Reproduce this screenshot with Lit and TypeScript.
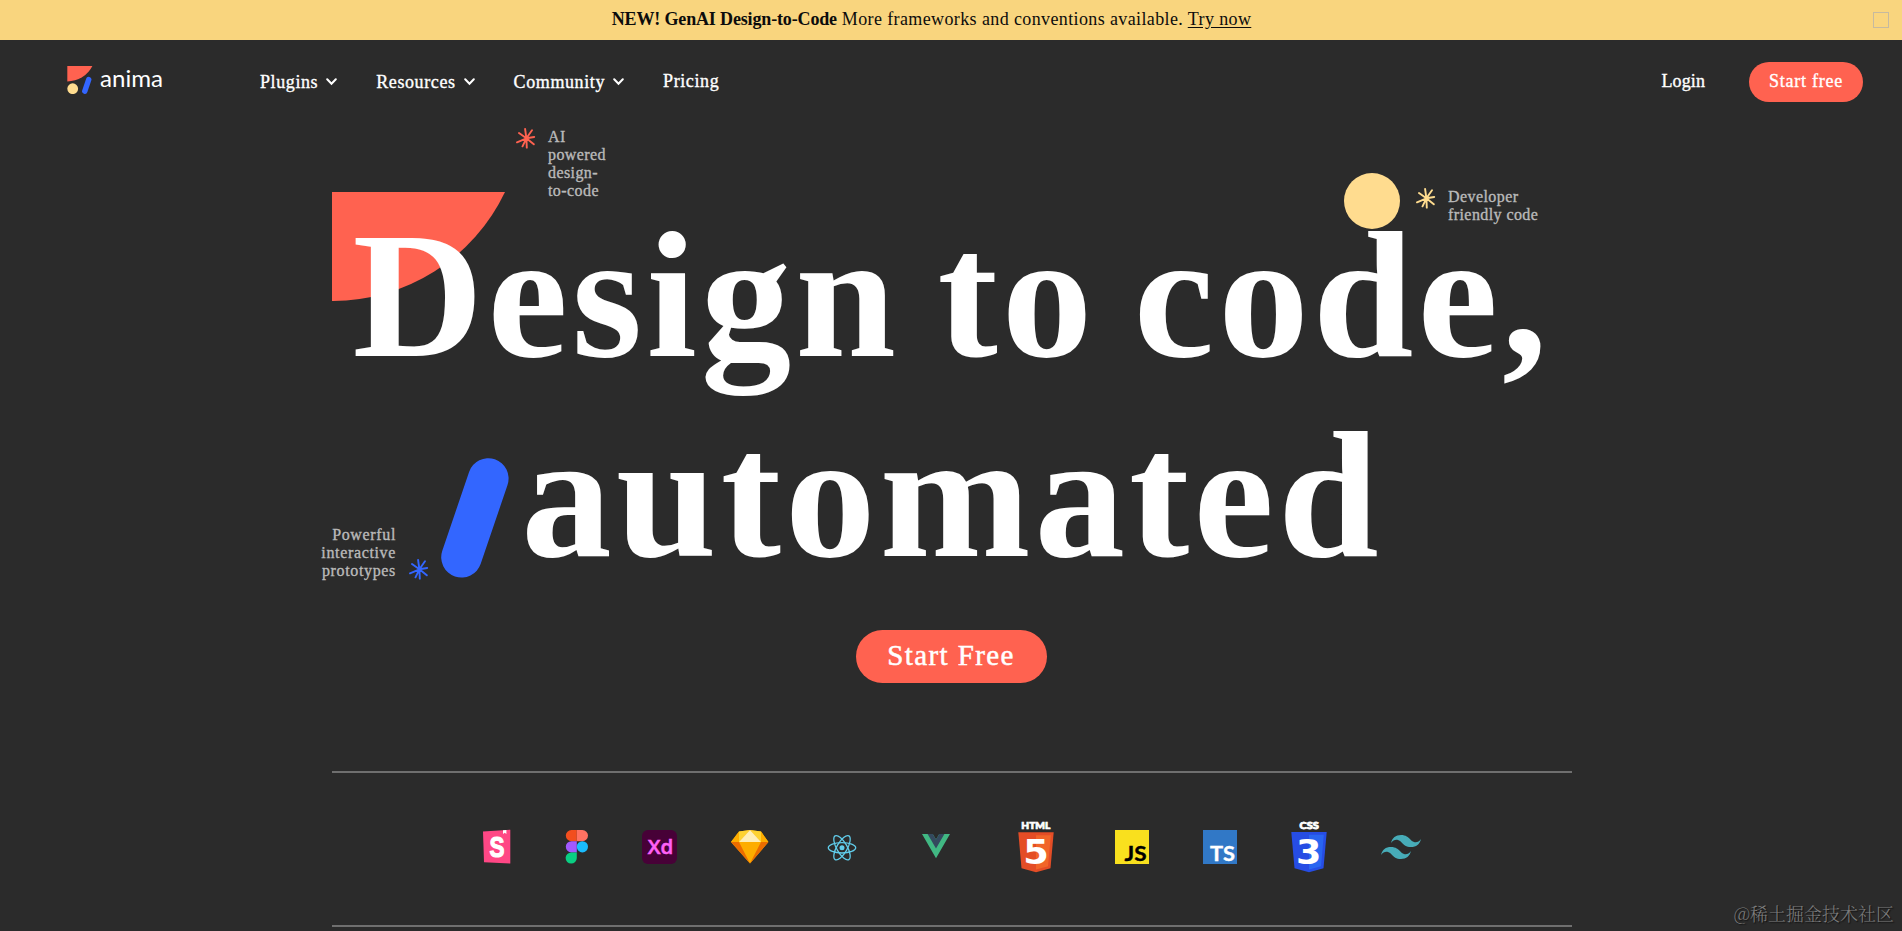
import { LitElement, html, css, svg } from "lit";
import { customElement, property } from "lit/decorators.js";

const star = svg`
  <path d="M10.4 10.3 9.1 1M10.4 10.3 16 2.3M10.4 10.3 18.2 9M10.4 10.3 17.8 16.3M10.4 10.3 10.8 19.6M10.4 10.3 6.5 18.3M10.4 10.3 1 14.3M10.4 10.3 3 5"
    fill="none" stroke="currentColor" stroke-width="1.9" stroke-linecap="round" />
`;

const tools = [
  {
    name: "Storybook",
    width: 28,
    art: svg`
      <path d="M0 10.6 27.3 8.7V42.5L1 41.2Z" fill="#ff4785" />
      <path d="M20 9.2 23.4 9V13L21.7 11.7 20 13Z" fill="#fff" />
      <text x="6.6" y="36" class="sans" font-size="29.5" fill="#fff" stroke="#fff" stroke-width="1.2" textLength="15" lengthAdjust="spacingAndGlyphs">S</text>
    `,
  },
  {
    name: "Figma",
    width: 23,
    art: svg`
      <path d="M6.4 9H11.8V20.2H6.4A5.6 5.6 0 0 1 6.4 9Z" fill="#f24e1e" />
      <path d="M11.8 9H17.4A5.6 5.6 0 0 1 17.4 20.2H11.8Z" fill="#ff7262" />
      <path d="M6.4 20.2H11.8V31.4H6.4A5.6 5.6 0 0 1 6.4 20.2Z" fill="#a259ff" />
      <circle cx="17.4" cy="25.8" r="5.6" fill="#1abcfe" />
      <path d="M6.4 31.4H11.8V37A5.6 5.6 0 1 1 6.4 31.4Z" fill="#0acf83" />
    `,
  },
  {
    name: "Adobe XD",
    width: 35,
    art: svg`
      <rect y="9" width="35" height="34" rx="6" fill="#470137" />
      <text x="5.8" y="32.8" class="open" font-size="20.5" fill="#ff61f6" stroke="#ff61f6" stroke-width=".5" textLength="25.6" lengthAdjust="spacingAndGlyphs">Xd</text>
    `,
  },
  {
    name: "Sketch",
    width: 38,
    art: svg`
      <path d="M8 10.5 19 9 30 10.5 37.4 21 19 42.6 0 21Z" fill="#fdad00" />
      <path d="M0 21H8L19 42.6Z" fill="#eb6c00" />
      <path d="M37.4 21H30L19 42.6Z" fill="#eb6c00" />
      <path d="M8 10.5 19 9 8 21Z" fill="#fdd231" />
      <path d="M30 10.5 19 9 30 21Z" fill="#fdd231" />
      <path d="M8 10.5V21H0Z" fill="#fdad00" />
      <path d="M30 10.5V21H37.4Z" fill="#fdad00" />
      <path d="M19 9 30 21H8Z" fill="#feeeb7" />
    `,
  },
  {
    name: "React",
    width: 38,
    art: svg`
      <g transform="translate(19 26.8)" fill="none" stroke="#61cdeb" stroke-width="1.3">
        <ellipse rx="13.7" ry="5.2" />
        <ellipse rx="13.7" ry="5.2" transform="rotate(60)" />
        <ellipse rx="13.7" ry="5.2" transform="rotate(120)" />
        <circle r="2.5" fill="#61cdeb" stroke="none" />
      </g>
    `,
  },
  {
    name: "Vue",
    width: 42,
    art: svg`
      <g transform="translate(7 13) scale(.107)">
        <path d="M161.1 0 130.9 52.4 100.6 0H0L130.9 226.7 261.7 0Z" fill="#41b883" />
        <path d="M161.1 0 130.9 52.4 100.6 0H52.3L130.9 136 209.4 0Z" fill="#34495e" />
      </g>
    `,
  },
  {
    name: "HTML5",
    width: 50,
    art: svg`
      <text x="10.3" y="8" class="black" font-size="9.6" fill="#fff" stroke="#fff" stroke-width=".7" textLength="29" lengthAdjust="spacingAndGlyphs">HTML</text>
      <path d="M7.3 11.3H42.7L39.5 47.3 25 51.3 10.5 47.3Z" fill="#e44d26" />
      <path d="M25 14.2H39.8L37 45.2 25 48.6Z" fill="#f16529" />
      <text x="12.2" y="43" class="block" font-size="34" fill="#fff" textLength="25.6" lengthAdjust="spacingAndGlyphs">5</text>
    `,
  },
  {
    name: "JavaScript",
    width: 34,
    art: svg`
      <rect y="9" width="34" height="34" fill="#f9e01e" />
      <text x="9.6" y="40" class="lato" font-size="21.5" fill="#000" stroke="#000" stroke-width=".4" textLength="22" lengthAdjust="spacingAndGlyphs">JS</text>
    `,
  },
  {
    name: "TypeScript",
    width: 34,
    art: svg`
      <rect y="9" width="34" height="34" fill="#3178c6" />
      <text x="7" y="40" class="lato" font-size="21.5" fill="#fff" stroke="#fff" stroke-width=".4" textLength="25" lengthAdjust="spacingAndGlyphs">TS</text>
    `,
  },
  {
    name: "CSS3",
    width: 36,
    art: svg`
      <text x="8.4" y="7.7" class="black" font-size="9.4" fill="#fff" stroke="#fff" stroke-width=".8" textLength="19.4" lengthAdjust="spacingAndGlyphs">CSS</text>
      <path d="M.3 11H35.7L32.5 47.3 18 51.3 3.5 47.3Z" fill="#264de4" />
      <path d="M18 13.8H32.8L30 45.2 18 48.6Z" fill="#2965f1" />
      <text x="5" y="43" class="block" font-size="34" fill="#fff" textLength="25.4" lengthAdjust="spacingAndGlyphs">3</text>
    `,
  },
  {
    name: "Tailwind CSS",
    width: 40,
    art: svg`
      <path transform="translate(0 6) scale(1.667)" fill="#47acb8" d="M12 4.8c-3.2 0-5.2 1.6-6 4.8 1.2-1.6 2.6-2.2 4.2-1.8.913.228 1.565.89 2.288 1.624C13.666 10.618 15.027 12 18 12c3.2 0 5.2-1.6 6-4.8-1.2 1.6-2.6 2.2-4.2 1.8-.913-.228-1.565-.89-2.288-1.624C16.337 6.182 14.976 4.8 12 4.8zM6 12c-3.2 0-5.2 1.6-6 4.8 1.2-1.6 2.6-2.2 4.2-1.8.913.228 1.565.89 2.288 1.624C7.666 17.818 9.027 19.2 12 19.2c3.2 0 5.2-1.6 6-4.8-1.2 1.6-2.6 2.2-4.2 1.8-.913-.228-1.565-.89-2.288-1.624C10.337 13.382 8.976 12 6 12z" />
    `,
  },
];

@customElement("promo-banner")
export class PromoBanner extends LitElement {
  render() {
    return html`
      <p class="text">
        <b class="lead">NEW! GenAI Design-to-Code</b> <span>More frameworks and conventions available.</span>
        <a class="link">Try now</a>
      </p>
      <button class="close" aria-label="Close"></button>
    `;
  }

  static styles = css`
    :host {
      position: relative;
      display: flex;
      align-items: center;
      justify-content: center;
      height: 40px;
      background: #f9d57e;
      color: #0c0c0c;
      padding-right: 39px;
      box-sizing: border-box;
    }

    .text {
      margin: 0;
      font-size: 18px;
      line-height: 22px;
      letter-spacing: 0.38px;
      padding-bottom: 3px;
      white-space: nowrap;
    }

    .lead {
      letter-spacing: -0.15px;
    }

    .link {
      text-decoration: underline;
      text-underline-offset: 2px;
    }

    .close {
      position: absolute;
      right: 13px;
      top: 12px;
      width: 16px;
      height: 16px;
      padding: 0;
      border: 1px solid #c6ba9f;
      background: none;
    }
  `;
}

@customElement("site-header")
export class SiteHeader extends LitElement {
  render() {
    return html`
      <svg class="logo" width="100" height="28" viewBox="0 0 100 28">
        <path d="M.3 0H25.4A28 28 0 0 1 .3 15.4Z" fill="#ff6250" />
        <circle cx="5.7" cy="22.7" r="5.4" fill="#ffdc8f" />
        <path d="M21.7 13.6 17.8 25.2" stroke="#36f" stroke-width="5.4" stroke-linecap="round" />
        <text x="33" y="21" font-size="22.5" fill="#fff" textLength="63" lengthAdjust="spacingAndGlyphs">anima</text>
      </svg>
      <nav class="menu">
        ${["Plugins", "Resources", "Community"].map(
          (label) => html`
            <a class="item">
              ${label}
              <svg width="11" height="8" viewBox="0 0 11 8">
                <path d="M1.2 1.3 5.5 5.8 9.8 1.3" fill="none" stroke="#fff" stroke-width="2" stroke-linecap="round" />
              </svg>
            </a>
          `
        )}
        <a class="item item--plain">Pricing</a>
      </nav>
      <a class="login">Login</a>
      <button class="start">Start free</button>
    `;
  }

  static styles = css`
    :host {
      display: flex;
      align-items: center;
      height: 84px;
      padding: 0 39px 0 67px;
      box-sizing: border-box;
      color: #fff;
      font-size: 18px;
      -webkit-text-stroke: 0.35px;
    }

    .logo {
      margin: -4px 93px 0 0;
      font-family: Lato, sans-serif;
      -webkit-text-stroke: 0;
    }

    .menu {
      display: flex;
      gap: 39px;
      flex: 1;
    }

    .item {
      display: flex;
      align-items: center;
      gap: 8px;
      letter-spacing: 0.6px;
    }

    .item--plain {
      margin-top: -2px;
    }

    .login {
      margin: -2px 44px 0 0;
      letter-spacing: 0.1px;
    }

    .start {
      width: 114px;
      height: 40px;
      padding: 0 0 2px;
      border: none;
      border-radius: 20px;
      background: #ff6250;
      color: inherit;
      font: inherit;
      letter-spacing: 0.75px;
      -webkit-text-stroke: inherit;
    }
  `;
}

@customElement("feature-note")
export class FeatureNote extends LitElement {
  @property({ type: Array }) lines: string[] = [];

  render() {
    return html`
      <svg class="star" width="20" height="21" viewBox="0 0 20 21">${star}</svg>
      <div class="lines">${this.lines.map((line) => html`<div>${line}</div>`)}</div>
    `;
  }

  static styles = css`
    :host {
      display: flex;
      gap: 12px;
    }

    .lines {
      color: #bababa;
      font-size: 16px;
      line-height: 18px;
      letter-spacing: 0.42px;
      white-space: nowrap;
      -webkit-text-stroke: 0.35px;
    }

    :host([reverse]) {
      flex-direction: row-reverse;
      align-items: flex-end;
    }

    :host([reverse]) .lines {
      text-align: right;
      letter-spacing: 0.65px;
    }
  `;
}

@customElement("hero-section")
export class HeroSection extends LitElement {
  render() {
    return html`
      <svg class="fan" width="173" height="109" viewBox="0 0 173 109">
        <path d="M0 0H173A191 191 0 0 1 0 109Z" fill="#ff6250" />
      </svg>
      <div class="dot"></div>
      <svg class="slash" width="68" height="120" viewBox="0 0 68 120">
        <path d="M47.3 20.5 20.5 99.3" stroke="#36f" stroke-width="40.6" stroke-linecap="round" />
      </svg>
      <feature-note class="note note--ai" .lines=${["AI", "powered", "design-", "to-code"]}></feature-note>
      <feature-note class="note note--dev" .lines=${["Developer", "friendly code"]}></feature-note>
      <feature-note class="note note--proto" reverse .lines=${["Powerful", "interactive", "prototypes"]}></feature-note>
      <h1 class="title">
        <div class="line">Design to code,</div>
        <div class="line">automated</div>
      </h1>
      <button class="cta">Start Free</button>
    `;
  }

  static styles = css`
    :host {
      position: relative;
      display: flex;
      flex-direction: column;
      align-items: center;
      width: 1240px;
      margin: 0 auto;
      padding: 71px 0 88px;
      left: 1px;
    }

    .title {
      position: relative;
      margin: 0 0 35px;
      color: #fff;
      font-size: 181px;
      font-weight: 700;
      line-height: 200px;
      text-align: center;
      white-space: nowrap;
    }

    .line {
      letter-spacing: 4.1px;
      word-spacing: -12px;
    }

    .cta {
      width: 191px;
      height: 53px;
      margin-right: 2px;
      padding: 0 0 3px;
      border: none;
      border-radius: 27px;
      background: #ff6250;
      color: #fff;
      font-family: inherit;
      font-size: 29px;
      letter-spacing: 1.4px;
      -webkit-text-stroke: 0.5px;
    }

    .fan,
    .dot,
    .slash,
    .note {
      position: absolute;
    }

    .fan {
      left: 0;
      top: 68px;
    }

    .dot {
      left: 1012px;
      top: 49px;
      width: 56px;
      height: 56px;
      border-radius: 50%;
      background: #ffdc8f;
    }

    .slash {
      left: 109px;
      top: 334px;
    }

    .note--ai {
      left: 184px;
      top: 4px;
      color: #ff6250;
    }

    .note--dev {
      left: 1084px;
      top: 64px;
      color: #ffdc8f;
    }

    .note--proto {
      right: 1143px;
      top: 402px;
      gap: 13px;
      color: #36f;
    }
  `;
}

@customElement("tool-strip")
export class ToolStrip extends LitElement {
  render() {
    return tools.map(
      (tool) => html`
        <svg width=${tool.width} height="52" viewBox="0 0 ${tool.width} 52" aria-label=${tool.name}>${tool.art}</svg>
      `
    );
  }

  static styles = css`
    :host {
      display: flex;
      justify-content: center;
      gap: 54px;
      width: 1240px;
      margin: 0 auto;
      padding: 48px 0 52px;
      border: solid #6f6f6f;
      border-width: 2px 0;
      position: relative;
      left: 1px;
    }

    svg {
      overflow: visible;
    }

    .sans {
      font-family: "Liberation Sans", sans-serif;
      font-weight: 700;
    }

    .open {
      font-family: "Open Sans", sans-serif;
      font-weight: 600;
    }

    .lato {
      font-family: Lato, sans-serif;
      font-weight: 700;
    }

    .black {
      font-family: Lato, sans-serif;
      font-weight: 900;
    }

    .block {
      font-family: "DejaVu Sans", sans-serif;
      font-weight: 700;
    }
  `;
}

@customElement("app-root")
export class AppRoot extends LitElement {
  render() {
    return html`
      <promo-banner></promo-banner>
      <site-header></site-header>
      <hero-section></hero-section>
      <tool-strip></tool-strip>
      <div class="watermark">@稀土掘金技术社区</div>
    `;
  }

  static styles = css`
    :host {
      position: relative;
      display: block;
      height: 931px;
      overflow: hidden;
      background: #2b2b2b;
      font-family: "Liberation Serif", "Times New Roman", serif;
    }

    .watermark {
      position: absolute;
      right: 8px;
      bottom: 5px;
      color: #7d7d7d;
      font-family: "Noto Serif CJK SC", "Noto Sans CJK SC", sans-serif;
      font-size: 18px;
      font-weight: 300;
      line-height: 26px;
      text-shadow: 1px 1px 1px #111;
    }
  `;
}
